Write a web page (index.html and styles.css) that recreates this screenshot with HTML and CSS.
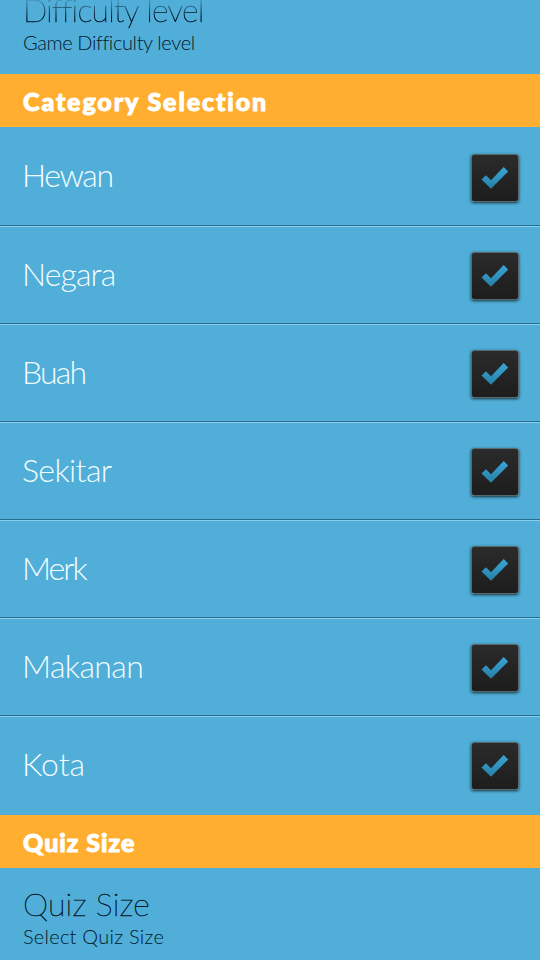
FILE: index.html
```html
<!DOCTYPE html>
<html lang="en">
<head>
<meta charset="utf-8">
<title>Settings</title>
<link rel="stylesheet" href="styles.css">
</head>
<body>
<svg class="defs" width="0" height="0">
  <defs>
    <linearGradient id="tick" x1="0" y1="0" x2="0" y2="1">
      <stop offset="0" stop-color="#39a6d8"/><stop offset="1" stop-color="#287fa6"/>
    </linearGradient>
    <symbol id="check" viewBox="0 0 28 24"><path d="M0.5 13.5 5 9.2 10 14.2 22.7 1 27.2 5.4 10 22.8Z" fill="url(#tick)"/></symbol>
  </defs>
</svg>
<main class="screen">
  <section class="pref pref-top">
    <div class="title"><span class="w-difficulty">Difficulty level</span></div>
    <div class="summary"><span class="w-game">Game Difficulty level</span></div>
  </section>
  <h2 class="header"><span class="w-category">Category Selection</span></h2>
  <ul class="list">
    <li class="row"><span class="w-hewan">Hewan</span><i class="box"><svg><use href="#check"/></svg></i></li>
    <li class="row"><span class="w-negara">Negara</span><i class="box"><svg><use href="#check"/></svg></i></li>
    <li class="row"><span class="w-buah">Buah</span><i class="box"><svg><use href="#check"/></svg></i></li>
    <li class="row"><span class="w-sekitar">Sekitar</span><i class="box"><svg><use href="#check"/></svg></i></li>
    <li class="row"><span class="w-merk">Merk</span><i class="box"><svg><use href="#check"/></svg></i></li>
    <li class="row"><span class="w-makanan">Makanan</span><i class="box"><svg><use href="#check"/></svg></i></li>
    <li class="row"><span class="w-kota">Kota</span><i class="box"><svg><use href="#check"/></svg></i></li>
  </ul>
  <h2 class="header"><span class="w-quiz">Quiz Size</span></h2>
  <section class="pref">
    <div class="title"><span class="w-size">Quiz Size</span></div>
    <div class="summary"><span class="w-select">Select Quiz Size</span></div>
  </section>
</main>
</body>
</html>
```
FILE: styles.css
```css
* { box-sizing: border-box; }
body { margin: 0; background: #50aed8; font-family: Lato, "Open Sans", sans-serif; font-weight: 300; font-variant-ligatures: none; overflow: hidden; }
.defs { display: block; }
.screen { width: 540px; height: 960px; overflow: hidden; }
.pref { display: flow-root; padding: 16px 23px 0 23px; color: #04192b; white-space: nowrap; }
.pref-top { height: 74px; padding-top: 0; }
.title { font-size: 32px; line-height: 40px; font-weight: 100; -webkit-text-stroke: 0.6px #04192b; }
.summary { font-size: 20px; line-height: 24px; }
.pref-top .title { margin-top: -10px; -webkit-mask-image: linear-gradient(transparent 6px, #000 28px); mask-image: linear-gradient(transparent 6px, #000 28px); }
.header { height: 53px; margin: 0; padding: 2px 23px 0; background: #ffae30; color: #fff; font-size: 25px; line-height: 50px; font-weight: 900; -webkit-text-stroke: 1px #fff; stroke-linejoin: round; white-space: nowrap; }
.list { list-style: none; margin: 0; padding: 0 0 2px; }
.row { height: 98px; padding: 0 21px 0 22px; display: flex; align-items: center; justify-content: space-between; color: #f2fdff; font-size: 32px; line-height: 40px; }
.row > span { margin-top: -2px; }
.row + .row { border-top: 1px solid #246f92; box-shadow: inset 0 1px #88cdea; }
.box { width: 48px; height: 48px; margin-top: 4px; display: flex; align-items: center; justify-content: center; background: linear-gradient(#2b2b2b, #1d1d1d); border: 1px solid #58696f; border-radius: 3px; box-shadow: 0 1px 3px #17303b; }
.row + .row .box { margin-top: 3px; }
.box svg { width: 28px; height: 24px; }
.w-difficulty { letter-spacing: -0.8px; }
.w-game { letter-spacing: -0.38px; }
.w-category { letter-spacing: 1.9px; }
.w-hewan { letter-spacing: -1.4px; }
.w-negara { letter-spacing: -0.9px; }
.w-buah { letter-spacing: -1.8px; }
.w-sekitar { letter-spacing: -0.6px; }
.w-merk { letter-spacing: -2px; }
.w-makanan { letter-spacing: -0.6px; }
.w-quiz { letter-spacing: 1px; }
.w-size { letter-spacing: 0.2px; }
.w-select { letter-spacing: 0.25px; }
```
